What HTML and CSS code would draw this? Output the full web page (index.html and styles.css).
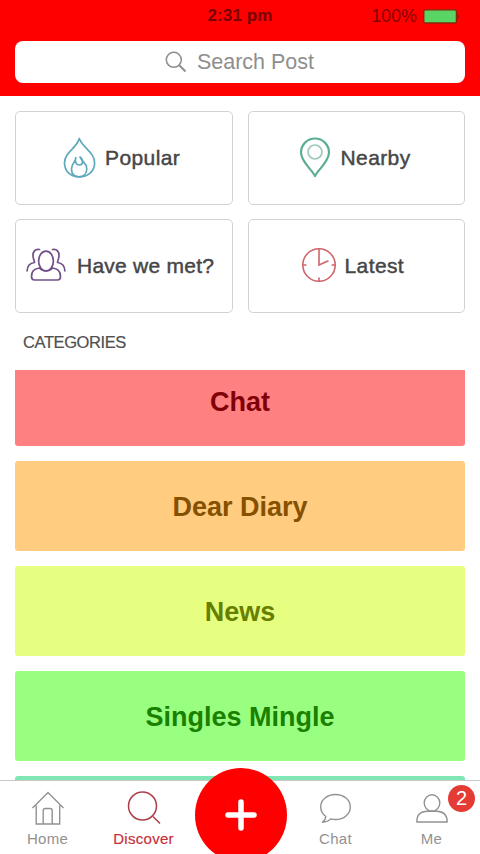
FILE: index.html
```html
<!DOCTYPE html>
<html lang="en">
<head>
<meta charset="utf-8">
<meta name="viewport" content="width=device-width, initial-scale=1">
<title>Discover</title>
<link rel="stylesheet" href="styles.css">
</head>
<body>
<div class="app">
  <header class="header">
    <div class="status">
      <span class="status-time">2:31 pm</span>
      <span class="status-battery">
        <span class="status-level">100%</span>
        <svg width="37" height="15" viewBox="0 0 37 15"><rect x=".8" y=".8" width="32.6" height="13.2" rx="1.5" fill="#58d564" stroke="#8c2208" stroke-width="1.3"/><path d="M34.600 5c1.600.8 1.600 4.200 0 5z" fill="#8c1008"/></svg>
      </span>
    </div>
    <div class="search">
      <svg width="22" height="22" viewBox="0 0 22 22" fill="none" stroke="#8e8e8e"><circle cx="8.800" cy="8.800" r="7.500" stroke-width="1.500"/><path d="M14 14l6.500 6.500" stroke-width="2"/></svg>
      <span class="search-text">Search Post</span>
    </div>
  </header>

  <nav class="filters">
    <a class="card card-popular">
      <svg width="33" height="42" viewBox="0 0 33 42" fill="none" stroke="#5fa9bd" stroke-width="1.700" stroke-linejoin="round"><path d="M16.300 1.500C14 11 1.500 15 1.500 26c0 8.500 6.500 13.800 14.800 13.800S31.600 34.500 31.600 26C31.600 15 20 11.500 16.300 1.500z"/><path d="M12.800 20.500C13.500 24 8.500 26 8.500 32c0 5 3 7.800 7.500 7.800s7.800-3 7.800-8c0-6-4.800-6.800-6.800-11.800 3.500 2.500 3.500 8-.8 8-3.700 0-4.500-4-3.400-7.500z"/></svg>
      <span class="card-label">Popular</span>
    </a>
    <a class="card card-nearby">
      <svg width="32" height="42" viewBox="0 0 32 42" fill="none"><path d="M16 39.200C13.500 33 2 25 2 15.500a14 14 0 0 1 28 0C30 25 18.500 33 16 39.200z" stroke="#5cae90" stroke-width="2.200" stroke-linejoin="round"/><circle cx="16" cy="15" r="7" stroke="#9ccbb8" stroke-width="1.700"/></svg>
      <span class="card-label">Nearby</span>
    </a>
    <a class="card card-met">
      <svg width="40" height="34" viewBox="0 0 40 34" fill="none" stroke="#715089" stroke-width="1.700" stroke-linecap="round" stroke-linejoin="round"><ellipse cx="20" cy="13" rx="7.400" ry="9.800"/><path d="M13.500 20C8 20.500 5.500 23.500 5.500 28.500c0 2.500 1 3.500 3 3.500h23c2 0 3-1 3-3.500 0-5-2.500-8-8-8.500M13.500 20c3.500 4 9.500 4 13 0"/><path d="M13.500 1.500C9 .5 6.800 4 7 8c.2 3 1 3.500 1.500 6.500C4 15 1.300 18 1.100 23M26.500 1.500C31 .5 33.200 4 33 8c-.2 3-1 3.500-1.500 6.500 4.500.5 7.200 3.500 7.400 8.500"/></svg>
      <span class="card-label">Have we met?</span>
    </a>
    <a class="card card-latest">
      <svg width="36" height="36" viewBox="0 0 36 36" fill="none" stroke="#cf646b" stroke-width="1.600"><circle cx="18" cy="18" r="16.200"/><path d="M18 2v16l9.500-4.300M18 34v-3.500M2 18h3.500M34 18h-3.500"/></svg>
      <span class="card-label">Latest</span>
    </a>
  </nav>

  <h2 class="section-title">CATEGORIES</h2>

  <main class="scroller">
    <div class="categories">
      <a class="category category-chat">Chat</a>
      <a class="category category-diary">Dear Diary</a>
      <a class="category category-news">News</a>
      <a class="category category-singles">Singles Mingle</a>
      <a class="category category-next"></a>
    </div>
  </main>

  <footer class="tabs">
    <a class="tab">
      <svg width="34" height="36" viewBox="0 0 34 36" fill="none" stroke="#929292" stroke-width="1.400"><path d="M1.500 18L17 2.500 32.500 18M5.200 15.500V34h7V20.500c0-1.500.8-2 2-2h5c1.200 0 2 .5 2 2V34h7.500V15.500M12.200 34h9"/></svg>
      <span>Home</span>
    </a>
    <a class="tab tab-active">
      <svg width="34" height="36" viewBox="0 0 34 36" fill="none" stroke="#ae3d47" stroke-width="1.500"><circle cx="15.500" cy="16" r="14"/><path d="M26 26.500l7 7"/></svg>
      <span>Discover</span>
    </a>
    <div class="tab"><a class="add"><svg width="34" height="34" viewBox="0 0 34 34" stroke="#fff" stroke-width="5.500" stroke-linecap="round"><path d="M17 4v26M4 17h26"/></svg></a></div>
    <a class="tab">
      <svg width="34" height="36" viewBox="0 0 34 36" fill="none" stroke="#929292" stroke-width="1.400" stroke-linejoin="round"><path d="M16.500 4.500c8.300 0 14.800 5.400 14.800 12.500s-6.500 12.500-14.800 12.500c-1.700 0-3.300-.2-4.800-.6-2 2.200-5 3.200-8.300 3.400 2.200-1.500 3.300-3.400 3.400-5.800C3.600 24 1.700 20.700 1.700 17c0-7.100 6.500-12.500 14.800-12.500z"/></svg>
      <span>Chat</span>
    </a>
    <a class="tab">
      <svg width="34" height="36" viewBox="0 0 34 36" fill="none" stroke="#929292" stroke-width="1.400" stroke-linejoin="round"><ellipse cx="17" cy="13" rx="7.800" ry="8.200"/><path d="M12.500 21.200C5 21.200 1.800 25 1.800 32h30.400c0-7-3.200-10.800-10.700-10.800z"/></svg>
      <span>Me</span>
      <b class="badge">2</b>
    </a>
  </footer>
</div>
</body>
</html>
```
FILE: styles.css
```css
* { box-sizing: border-box; }

body {
  margin: 0;
  background: #fff;
  font-family: "Liberation Sans", Arial, sans-serif;
}

svg { display: block; flex: none; }

.app {
  width: 480px;
  height: 854px;
  display: flex;
  flex-direction: column;
  overflow: hidden;
}

.header {
  height: 96px;
  flex: none;
  padding: 0 15px;
  background: #f00;
}

.status {
  height: 41px;
  display: grid;
  grid-template-columns: 1fr auto 1fr;
  line-height: 32px;
}

.status-time {
  grid-column: 2;
  color: #780000;
  font-size: 17px;
  font-weight: bold;
  letter-spacing: .1px;
}

.status-battery {
  height: 32px;
  display: flex;
  align-items: center;
  justify-content: flex-end;
  gap: 6px;
  padding-right: 5px;
}

.status-level {
  color: #860000;
  font-size: 17.5px;
  letter-spacing: .2px;
}

.search {
  height: 42px;
  display: flex;
  align-items: center;
  justify-content: center;
  gap: 10px;
  padding-right: 1px;
  border-radius: 8px;
  background: #fff;
  color: #8e8e8e;
  font-size: 21.5px;
}

.filters {
  display: grid;
  grid-template-columns: 1fr 1fr;
  grid-auto-rows: 94px;
  gap: 14px 15px;
  padding: 15px 15px 0;
}

.card {
  display: flex;
  align-items: center;
  border: 1px solid #d2d2d2;
  border-radius: 5px;
  color: #464646;
  font-size: 21px;
  letter-spacing: .4px;
  -webkit-text-stroke: .45px #464646;
}

.card-popular { gap: 9px; padding-left: 47px; }
.card-nearby { gap: 10px; padding-left: 50px; }
.card-met { gap: 11px; padding-left: 10px; letter-spacing: .25px; }
.card-latest { gap: 8px; padding-left: 52px; }
.card-met svg, .card-latest svg { margin-bottom: 2px; }

.section-title {
  height: 57px;
  flex: none;
  margin: 0;
  padding-left: 23px;
  color: #505050;
  font-size: 16.5px;
  font-weight: normal;
  letter-spacing: -.4px;
  line-height: 58px;
  -webkit-text-stroke: .2px #505050;
}

.scroller {
  flex: 1;
  min-height: 0;
  overflow: hidden;
  padding: 0 15px;
}

.categories {
  display: grid;
  grid-auto-rows: 90px;
  gap: 15.1px;
  margin-top: -14px;
}

.category {
  display: flex;
  align-items: center;
  justify-content: center;
  padding-top: 3px;
  border-radius: 3px;
  font-size: 27px;
  font-weight: bold;
}

.category-chat { background: #ff8080; color: #800008; }
.category-diary { background: #ffcc80; color: #855000; }
.category-news { background: #e6ff80; color: #667f00; }
.category-singles { background: #99ff80; color: #198000; }
.category-next { background: #80e6b3; }

.tabs {
  height: 74px;
  flex: none;
  display: grid;
  grid-template-columns: repeat(5, 96px);
  border-top: 1px solid #c8c8c8;
}

.tab {
  position: relative;
  display: flex;
  flex-direction: column;
  align-items: center;
  padding: 9px 1px 0 0;
  color: #929292;
  font-size: 15px;
  line-height: 17px;
  letter-spacing: .3px;
}

.tab span { margin-top: 4px; }

.tab-active { color: #c9303a; -webkit-text-stroke: .2px #c9303a; }

.add {
  position: absolute;
  top: -13px;
  left: 3px;
  width: 92px;
  height: 94px;
  display: flex;
  align-items: center;
  justify-content: center;
  border-radius: 50%;
  background: #f00;
}

.badge {
  position: absolute;
  top: 4px;
  left: 64px;
  width: 27px;
  height: 27px;
  border-radius: 50%;
  background: #e43b35;
  color: #fff;
  font-size: 20px;
  font-weight: normal;
  line-height: 27px;
  letter-spacing: 0;
  text-align: center;
}
```
